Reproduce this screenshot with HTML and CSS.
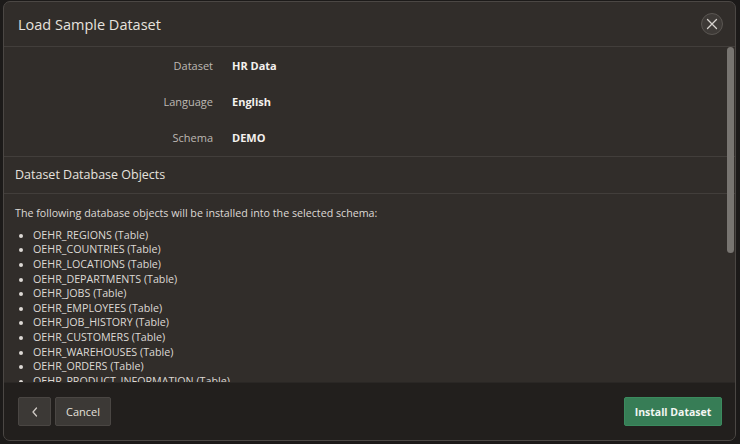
FILE: index.html
```html
<!DOCTYPE html>
<html lang="en">
<head>
<meta charset="utf-8">
<title>Load Sample Dataset</title>
<link rel="stylesheet" href="styles.css">
</head>
<body>
<div class="dialog">
  <div class="dlg-header">
    <h1 class="dlg-title">Load Sample Dataset</h1>
    <button class="close-btn" aria-label="Close">
      <svg width="12" height="12" viewBox="0 0 12 12"><path d="M1.5 1.5 L10.5 10.5 M10.5 1.5 L1.5 10.5" stroke="#d6d2ce" stroke-width="1.3" fill="none" stroke-linecap="round"/></svg>
    </button>
  </div>
  <div class="dlg-body">
    <div class="form">
      <div class="row"><span class="lbl">Dataset</span><span class="val">HR Data</span></div>
      <div class="row"><span class="lbl">Language</span><span class="val">English</span></div>
      <div class="row"><span class="lbl">Schema</span><span class="val">DEMO</span></div>
    </div>
    <div class="region-head">Dataset Database Objects</div>
    <div class="region-body">
      <p class="intro">The following database objects will be installed into the selected schema:</p>
      <ul class="objects">
        <li>OEHR_REGIONS (Table)</li>
        <li>OEHR_COUNTRIES (Table)</li>
        <li>OEHR_LOCATIONS (Table)</li>
        <li>OEHR_DEPARTMENTS (Table)</li>
        <li>OEHR_JOBS (Table)</li>
        <li>OEHR_EMPLOYEES (Table)</li>
        <li>OEHR_JOB_HISTORY (Table)</li>
        <li>OEHR_CUSTOMERS (Table)</li>
        <li>OEHR_WAREHOUSES (Table)</li>
        <li>OEHR_ORDERS (Table)</li>
        <li>OEHR_PRODUCT_INFORMATION (Table)</li>
        <li>OEHR_ORDER_ITEMS (Table)</li>
      </ul>
    </div>
    <div class="scrollbar"><div class="thumb"></div></div>
  </div>
  <div class="dlg-footer">
    <div class="left-btns">
      <button class="btn btn-icon" aria-label="Previous">
        <svg width="8" height="12" viewBox="0 0 8 12"><path d="M5.5 2 L2 6 L5.5 10" stroke="#cfcac5" stroke-width="1.3" fill="none" stroke-linecap="round" stroke-linejoin="round"/></svg>
      </button>
      <button class="btn">Cancel</button>
    </div>
    <button class="btn btn-primary">Install Dataset</button>
  </div>
</div>
</body>
</html>
```

FILE: styles.css
```css
html, body {
  margin: 0;
  padding: 0;
  height: 100%;
}
body {
  background: #1c1a19;
  font-family: "Open Sans", "Noto Sans", sans-serif;
  color: #e4e0dc;
  overflow: hidden;
}
.dialog {
  box-sizing: border-box;
  margin: 1px 4px 0 3px;
  height: 440px;
  border: 1px solid #4b4744;
  border-radius: 7px;
  background: #312d2a;
  display: flex;
  flex-direction: column;
  overflow: hidden;
}
.dlg-header {
  height: 44px;
  flex: none;
  display: flex;
  align-items: center;
  justify-content: space-between;
  padding: 0 14px 0 14px;
  border-bottom: 1px solid #423e3b;
}
.dlg-title {
  margin: 0;
  font-size: 14.5px;
  font-weight: 400;
  color: #e6e2de;
}
.close-btn {
  width: 22px;
  height: 22px;
  border-radius: 50%;
  border: 1px solid #5a5652;
  background: #3e3a37;
  padding: 0;
  display: flex;
  align-items: center;
  justify-content: center;
  margin-right: -2px;
}
.dlg-body {
  flex: 1;
  position: relative;
  overflow: hidden;
}
.form {
  border-bottom: 1px solid #423e3b;
}
.row {
  height: 36.3px;
  display: flex;
  align-items: center;
  font-size: 11px;
}
.lbl {
  width: 209px;
  text-align: right;
  color: #bdb8b3;
}
.val {
  margin-left: 19px;
  font-weight: 700;
  color: #f4f1ee;
}
.region-head {
  height: 36px;
  display: flex;
  align-items: center;
  padding-left: 11px;
  font-size: 12.5px;
  color: #e6e2de;
  border-bottom: 1px solid #423e3b;
}
.region-body {
  padding: 12px 11px 0;
  font-size: 10.7px;
  color: #ddd9d5;
}
.intro {
  margin: 0 0 8px;
  line-height: 14px;
}
.objects {
  margin: 0;
  padding-left: 18px;
}
.objects li {
  height: 14.6px;
  line-height: 14.6px;
}
.scrollbar {
  position: absolute;
  top: 0;
  right: 1px;
  bottom: 0;
  width: 7px;
}
.thumb {
  height: 206px;
  border-radius: 4px;
  background: #787571;
}
.dlg-footer {
  flex: none;
  height: 58px;
  box-sizing: border-box;
  background: #221f1d;
  border-top: 1px solid #2a2725;
  display: flex;
  align-items: flex-start;
  justify-content: space-between;
  padding: 14px 13px 0 14px;
}
.left-btns {
  display: flex;
  gap: 4px;
}
.btn {
  height: 29px;
  box-sizing: border-box;
  border: 1px solid #4a4643;
  border-radius: 2px;
  background: #3c3936;
  color: #e4e0dc;
  font-family: inherit;
  font-size: 11px;
  padding: 0 10px;
  display: flex;
  align-items: center;
  justify-content: center;
}
.btn-icon {
  width: 33px;
  padding: 0;
}
.btn-primary {
  background: #377d56;
  border-color: #3b8a5e;
  color: #f2f7f3;
  font-weight: 700;
  font-size: 10.5px;
  width: 98px;
  padding: 0;
}
```
